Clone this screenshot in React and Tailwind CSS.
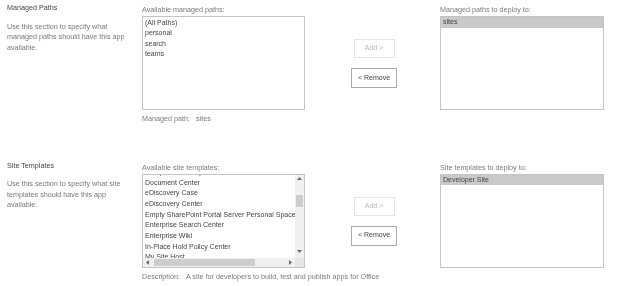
import React from 'react';

const item = 'px-[2px] whitespace-nowrap text-[7px] text-[#444]';

function Arrow({ dir }) {
  const d = {
    up: 'M0 3 L2.5 0 L5 3 Z',
    down: 'M0 0 L2.5 3 L5 0 Z',
    left: 'M3 0 L0 2.5 L3 5 Z',
    right: 'M0 0 L3 2.5 L0 5 Z',
  }[dir];
  const vert = dir === 'up' || dir === 'down';
  return (
    <svg width={vert ? 5 : 3} height={vert ? 3 : 5} viewBox={vert ? '0 0 5 3' : '0 0 3 5'}>
      <path d={d} fill="#6a6a6a" />
    </svg>
  );
}

function Section({ title, desc, label, footer, rightLabel, selected, list, className = '' }) {
  return (
    <div className={`flex items-start ${className}`}>
      {/* left: title + help text */}
      <div className="w-[142px] pl-[7px]">
        <div className="pt-[2px] leading-[11px] text-[#444] whitespace-nowrap">{title}</div>
        <div className="mt-[8.5px] leading-[10.5px] text-[#777] whitespace-nowrap">
          {desc.map((l) => (
            <div key={l}>{l}</div>
          ))}
        </div>
      </div>

      {/* available list */}
      <div className="w-[163px]">
        <div className="h-[16px] pt-[4px] leading-[11px] whitespace-nowrap">{label}</div>
        <div className="h-[94px] border border-[#c4c4c4] bg-white overflow-hidden">{list}</div>
        <div className="mt-[3px] leading-[11px] whitespace-nowrap">{footer}</div>
      </div>

      {/* add / remove */}
      <div className="w-[135px] pl-[3px] pt-[39px] flex flex-col items-center">
        <button
          type="button"
          className="w-[41px] h-[19px] border border-[#e4e4e4] bg-white text-[#b8b8b8] text-[7px] flex items-center justify-center"
        >
          Add &gt;
        </button>
        <button
          type="button"
          className="mt-[10px] w-[46px] h-[20px] border border-[#ababab] bg-white text-[#444] text-[7px] flex items-center justify-center"
        >
          &lt; Remove
        </button>
      </div>

      {/* deploy-to list */}
      <div className="w-[164px]">
        <div className="h-[16px] pt-[4px] leading-[11px] whitespace-nowrap">{rightLabel}</div>
        <div className="h-[94px] border border-[#c4c4c4] bg-white overflow-hidden">
          <div className={`${item} leading-[10.5px] bg-[#c9c9c9]`}>{selected}</div>
        </div>
      </div>
    </div>
  );
}

const templates = [
  'Compliance Policy Center',
  'Document Center',
  'eDiscovery Case',
  'eDiscovery Center',
  'Empty SharePoint Portal Server Personal Space',
  'Enterprise Search Center',
  'Enterprise Wiki',
  'In-Place Hold Policy Center',
  'My Site Host',
];

function PathsList() {
  return (
    <div className="pt-[0.5px]">
      {['(All Paths)', 'personal', 'search', 'teams'].map((p) => (
        <div key={p} className={`${item} leading-[10.5px]`}>{p}</div>
      ))}
    </div>
  );
}

function TemplatesList() {
  return (
    <div className="h-full flex flex-col">
      <div className="flex h-[83px]">
        <div className="flex-1 overflow-hidden">
          <div className="mt-[-7.7px]">
            {templates.map((t) => (
              <div key={t} className={`${item} leading-[10.7px]`}>{t}</div>
            ))}
          </div>
        </div>
        <div className="w-[9px] bg-[#f0f0f0] flex flex-col">
          <div className="h-[7px] flex items-center justify-center"><Arrow dir="up" /></div>
          <div className="flex-1 pt-[13px]">
            <div className="mx-auto w-[7px] h-[12px] bg-[#cdcdcd]" />
          </div>
          <div className="h-[12px] flex items-center justify-center"><Arrow dir="down" /></div>
        </div>
      </div>
      <div className="flex h-[9px]">
        <div className="flex-1 bg-[#f0f0f0] flex items-center">
          <div className="w-[9px] flex justify-center"><Arrow dir="left" /></div>
          <div className="ml-[2px] w-[101px] h-[7px] bg-[#cdcdcd]" />
          <div className="flex-1" />
          <div className="w-[9px] flex justify-center"><Arrow dir="right" /></div>
        </div>
        <div className="w-[9px] bg-[#e6e6e6]" />
      </div>
    </div>
  );
}

export default function App() {
  return (
    <div className="w-[624px] h-[286px] bg-white overflow-hidden antialiased [will-change:transform] font-['Liberation_Sans',Arial,sans-serif] text-[7.2px] text-[#7a7a7a]">
      <Section
        title="Managed Paths"
        desc={['Use this section to specify what', 'managed paths should have this app', 'available.']}
        label="Available managed paths:"
        footer={<span>Managed path:&nbsp;&nbsp;&nbsp;sites</span>}
        rightLabel="Managed paths to deploy to:"
        selected="sites"
        list={<PathsList />}
      />
      <Section
        className="mt-[33.5px]"
        title="Site Templates"
        desc={['Use this section to specify what site', 'templates should have this app', 'available.']}
        label="Available site templates:"
        footer={<span>Description:&nbsp;&nbsp;&nbsp;A site for developers to build, test and publish apps for Office</span>}
        rightLabel="Site templates to deploy to:"
        selected="Developer Site"
        list={<TemplatesList />}
      />
    </div>
  );
}
